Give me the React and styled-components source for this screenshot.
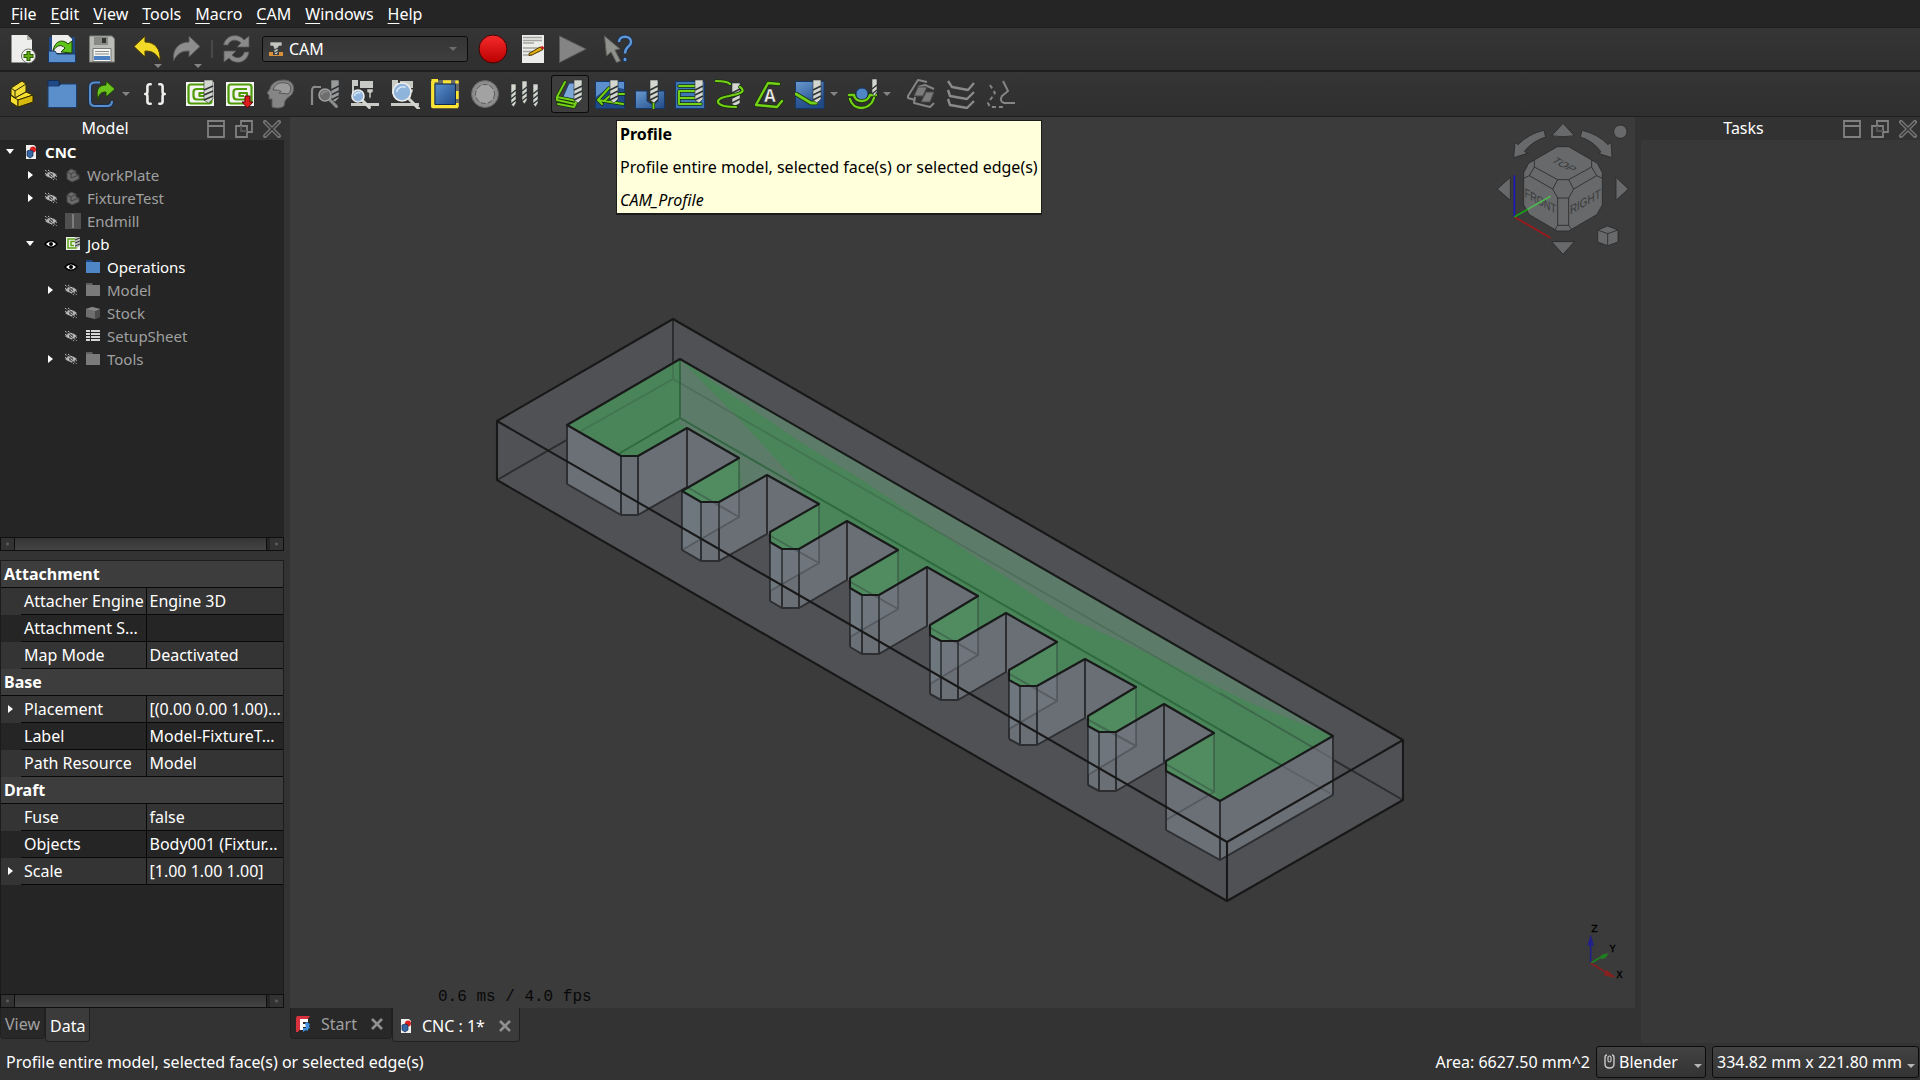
import React from 'react';
import styled, { createGlobalStyle, css } from 'styled-components';
import { Braces } from 'lucide-react';

const GlobalStyle = createGlobalStyle`
  * { box-sizing: border-box; }
  html, body { margin: 0; padding: 0; background: #333333; }
  body, button, select {
    font-family: "Noto Sans", "Open Sans", sans-serif;
    font-size: 16px;
    color: #ffffff;
  }
  button, select { border: 0; background: none; padding: 0; margin: 0; }
  svg { display: block; flex: none; }
`;

/* ---------- window ---------- */

const Window = styled.div`
  display: flex;
  flex-direction: column;
  height: 100vh;
  overflow: hidden;
  background: #333333;
`;

const MenuBar = styled.nav`
  display: flex;
  gap: 14px;
  height: 28px;
  padding-left: 11px;
  background: #252525;
  border-bottom: 1px solid #1e1e1e;
`;

const MenuButton = styled.button`
  line-height: 26px;

  &::first-letter {
    text-decoration: underline;
    text-underline-offset: 3px;
  }
`;

const Toolbar = styled.div`
  position: relative;
  z-index: 2;
  display: flex;
  align-items: center;
  flex: none;
  height: ${p => p.$height}px;
  padding-left: 2px;
  gap: 5px;
  background: linear-gradient(#353535, #2f2f2f);
  border-bottom: ${p => p.$line}px solid #1f1f1f;
`;

const Group = styled.div`
  display: flex;
  align-items: center;
`;

const ToolSlot = styled.div`
  position: relative;
  display: flex;
`;

const ToolButton = styled.button`
  display: flex;
  align-items: center;
  gap: 5px;
  height: 38px;
  width: ${p => (p.$menu ? 51 : 38)}px;
  padding-left: 4px;
  margin: 0 1px;
  border-radius: 3px;
  ${p => p.$active && css`
    background: #3d3d3d;
    box-shadow: inset 0 0 0 1px #0c0c0c;
  `}
`;

const Caret = styled.span`
  width: 0;
  height: 0;
  border: 4px solid transparent;
  border-top-color: ${p => p.$color || '#848484'};
  border-bottom: 0;
`;

const CornerCaret = styled(Caret)`
  position: absolute;
  right: 5px;
  bottom: 0;
`;

const Divider = styled.span`
  width: 2px;
  height: 18px;
  margin: 0 4px;
  background: #484848;
`;

const WorkbenchBox = styled.label`
  display: flex;
  align-items: center;
  width: 206px;
  height: 26px;
  padding: 0 10px 0 5px;
  border: 1px solid #0c0c0c;
  border-radius: 3px;
  background: linear-gradient(#353535, #3f3f3f);
`;

const WorkbenchSelect = styled.select`
  appearance: none;
  flex: 1;
  padding-left: 5px;
  outline: none;
`;

const Tip = styled.div`
  position: absolute;
  top: 45px;
  left: 66px;
  padding: 2px 3px;
  white-space: nowrap;
  line-height: 22px;
  color: #000000;
  background: #ffffdc;
  border: 1px solid #1c1c1c;
  border-bottom-width: 2px;

  p { margin: 0 0 11px; }
  p:last-child { margin: 0; }
`;

const Body = styled.div`
  display: flex;
  flex: 1;
  min-height: 0;
  gap: 6px;
`;

/* ---------- docks ---------- */

const LeftDock = styled.aside`
  display: flex;
  flex-direction: column;
  width: 284px;
`;

const RightDock = styled.aside`
  display: flex;
  flex-direction: column;
  width: 279px;
`;

const DockTitle = styled.header`
  display: flex;
  align-items: center;
  flex: none;
  gap: 10px;
  height: 23px;
  padding: 0 3px;
  background: #323232;

  h2 {
    flex: 1;
    margin: 0 -10px 0 0;
    font-size: 16px;
    font-weight: 400;
    line-height: 23px;
    text-align: center;
  }
`;

const DockBody = styled.div`
  flex: 1;
  background: #383838;
`;

const Tree = styled.ul`
  flex: 397;
  min-height: 0;
  margin: 0;
  padding: 0;
  list-style: none;
  background: #252525;
  font-size: 15px;
`;

const TreeRow = styled.li`
  display: flex;
  align-items: center;
  height: 23px;
  padding-left: ${p => p.$level * 20}px;
  color: ${p => (p.$dim ? '#a0a0a0' : '#ffffff')};
  font-weight: ${p => (p.$bold ? 700 : 400)};
`;

const TreeCell = styled.span`
  display: flex;
  justify-content: center;
  width: ${p => p.$w}px;
`;

const TreeText = styled.span`
  padding-left: 3px;
`;

const Expander = styled.span`
  width: 0;
  height: 0;
  border: 4px solid transparent;
  ${p => (p.$open
    ? css`border-top: 5px solid #ffffff; border-bottom: 0;`
    : css`border-left: 5px solid #ffffff; border-right: 0;`)}
`;

const ScrollBar = styled.div`
  display: flex;
  flex: none;
  height: 14px;
  border: 1px solid #0f0f0f;
  background: #252525;
`;

const ScrollEnd = styled.button`
  width: 13px;
  background: radial-gradient(circle, #5a5a5a 1px, #333333 2px);
`;

const ScrollThumb = styled.div`
  flex: 1;
  margin-right: 3px;
  border: solid #0f0f0f;
  border-width: 0 1px;
  background: linear-gradient(#353535, #444444);
`;

const PropertyPane = styled.div`
  flex: 434;
  min-height: 0;
  margin-top: 9px;
  background: #252525;
  border: 1px solid #1c1c1c;
  border-bottom: 0;
`;

const PropertyTable = styled.table`
  width: 100%;
  table-layout: fixed;
  border-collapse: collapse;
  line-height: 26px;

  th, td { padding: 0; text-align: left; height: 27px; }
`;

const GroupRow = styled.tr`
  background: #3d3d3d;
  th { padding-left: 3px; border-bottom: 1px solid #090909; }
`;

const PropRow = styled.tr`
  background: ${p => (p.$alt ? '#252525' : '#343434')};

  td, th {
    overflow: hidden;
    text-overflow: ellipsis;
    white-space: nowrap;
    font-weight: 400;
  }
  th { padding-left: 3px; border-bottom: 1px solid #090909; }
  td:last-child {
    padding-left: 3px;
    border-left: 1px solid #090909;
    border-bottom: 1px solid #090909;
  }
  td:first-child > span { margin-left: 7px; display: block; border-left-width: 5px; }
`;

const TabBar = styled.div`
  display: flex;
  align-items: flex-start;
  flex: none;
  height: 35px;
`;

const Tab = styled.button`
  display: flex;
  align-items: center;
  height: ${p => (p.$active ? 34 : 31)}px;
  padding: ${p => p.$pad || '2px 4px 0'};
  border: 1px solid #202020;
  border-top: 0;
  border-radius: 0 0 4px 4px;
  color: ${p => (p.$active ? '#ffffff' : '#a0a0a0')};
  background: ${p => (p.$active ? '#3b3b3b' : '#282828')};
`;

const TabText = styled.span`
  padding: 0 14px 0 10px;
`;

/* ---------- 3D view ---------- */

const Center = styled.main`
  display: flex;
  flex-direction: column;
  flex: 1;
  min-width: 0;
`;

const Viewport = styled.section`
  position: relative;
  flex: 1;
  min-height: 0;
  background: #3b3b3b;
`;

const SceneSvg = styled.svg`
  width: 100%;
  height: 100%;
`;

const CubeSvg = styled.svg`
  position: absolute;
  top: 0;
  right: 0;
`;

const AxisSvg = styled.svg`
  position: absolute;
  right: 0;
  bottom: 0;
`;

const Fps = styled.div`
  position: absolute;
  left: 148px;
  bottom: 1px;
  color: #080808;
  font-family: "Liberation Mono", monospace;
  font-size: 16px;
  line-height: 20px;
`;

/* ---------- status bar ---------- */

const StatusBar = styled.footer`
  display: flex;
  align-items: center;
  flex: none;
  gap: 6px;
  height: 37px;
  padding: 0 1px 0 6px;
`;

const StatusText = styled.span`
  flex: ${p => (p.$grow ? 1 : 'none')};
`;

const StatusButton = styled.button`
  display: flex;
  align-items: center;
  width: ${p => p.$w}px;
  height: 32px;
  padding: 0 3px 0 ${p => p.$left}px;
  border: 1px solid #0c0c0c;
  border-radius: 3px;
  background: linear-gradient(#424242, #333333);

  svg { margin-right: 4px; }
  span:last-child { margin: 8px 0 0 auto; }
`;

/* ---------- icons ---------- */

const Icon30 = ({ children }) => (
  <svg width="30" height="30" viewBox="0 0 30 30" fill="none" strokeLinejoin="round" aria-hidden="true">{children}</svg>
);

const Bit = ({ x, y, w = 8, h = 23, off }) => {
  const fill = off ? '#9a9a9a' : '#d3d7cf';
  const lines = [];
  for (let i = 6; i < h - 2; i += 5) lines.push(`M${x} ${y + i + 4}L${x + w} ${y + i}`);
  return (
    <g>
      <path d={`M${x} ${y}h${w}v${h - 4}l${-w / 2} 4l${-w / 2} -3z`} fill={fill} stroke="#2e3436" strokeWidth=".6" />
      <path d={lines.join('')} stroke="#2e3436" strokeWidth="1.5" />
    </g>
  );
};

const Green = ({ d, w = 2.2 }) => (
  <g fill="none" strokeLinecap="round">
    <path d={d} stroke="#17310a" strokeWidth={w + 1.4} />
    <path d={d} stroke="#73d216" strokeWidth={w} />
  </g>
);

const Glass = ({ x, y, r, off }) => (
  <g>
    <path d={`M${x + r * 0.7} ${y + r * 0.7}L${x + r * 1.9} ${y + r * 1.9}`} stroke={off ? '#8c8c8c' : '#d3d7cf'} strokeWidth="3" strokeLinecap="round" />
    <circle cx={x} cy={y} r={r} fill={off ? '#6e6e6e' : '#8fb4dc'} stroke={off ? '#a0a0a0' : '#eeeeec'} strokeWidth="1.6" />
    <path d={`M${x - r * 0.6} ${y}a${r * 0.7} ${r * 0.7} 0 0 1 ${r} ${-r * 0.5}`} stroke={off ? '#8c8c8c' : '#d5e5f5'} strokeWidth="1.5" />
  </g>
);

const JobBase = () => (
  <g>
    <rect x="1" y="3" width="28" height="24" fill="#f4f5f3" />
    <path d="M25 5.500H5.500Q3.500 5.500 3.500 8V22Q3.500 24.500 6 24.500H24Q26.500 24.500 26.500 22V8Q26.500 5.500 24 5.500" stroke="#4e9a06" strokeWidth="2.200" />
    <path d="M22 10H12Q8.500 10 8.500 13V17Q8.500 20.500 12 20.500H22V14H14.500V17H19" stroke="#4e9a06" strokeWidth="2.200" />
  </g>
);

const Machine = () => (
  <g fill="#c8cbc5">
    <path d="M2 1h6v6h-4v8h-2zM10 2h13v7h-13z" />
    <path d="M17 10h6v3l-2 1v4l-1 2-1-2v-4l-2-1z" stroke="#333" strokeWidth=".5" />
    <path d="M1 24h28v3h-28z" />
  </g>
);

const icons = {
  newDoc: (
    <Icon30>
      <path d="M4.500 1H20l5 5V28.500H4.500z" fill="#eeeeec" />
      <path d="M20 1v5h5z" fill="#a8aaa6" />
      <circle cx="21.500" cy="22" r="7" fill="#f3f4f2" stroke="#6d706b" />
      <path d="M21.500 17v10M16.500 22h10" stroke="#2c5c05" strokeWidth="4" />
      <path d="M21.500 18v8M17.500 22h8" stroke="#5fae12" strokeWidth="2" />
    </Icon30>
  ),
  open: (
    <Icon30>
      <path d="M2 3h4v24H2zM24 3h4v24h-4z" fill="#204a87" />
      <path d="M5 1h16l4 4v14H5z" fill="#eeeeec" />
      <path d="M1.500 17H8l2 3h18.500v8.500h-27z" fill="#5b8fcb" stroke="#173a6b" />
      <path d="M6 17C8 6 16 5 21 10l4-3v12l-11-1 4-4C14 10 10 11 6 17z" fill="#5fc41a" stroke="#1d4208" />
    </Icon30>
  ),
  save: (
    <Icon30>
      <path d="M3 2h22l2.500 3v23H2.500V3z" fill="#b9bcb6" stroke="#7b7e79" />
      <rect x="7" y="3" width="14" height="8" fill="#888a85" />
      <rect x="15" y="4" width="4" height="5" fill="#343434" />
      <rect x="6" y="14.500" width="18" height="13" fill="#f4f4f2" stroke="#77797a" />
      <path d="M8 17.500h14M8 20h14" stroke="#8c8e8a" />
      <path d="M7 24h16" stroke="#4a7fc1" strokeWidth="4" />
    </Icon30>
  ),
  undo: (
    <Icon30>
      <path d="M2 12.500L13 2v6C23 8 29 15 28 27C25 20 21 17 13 17v6z" fill="#f2d827" stroke="#4a3d00" />
    </Icon30>
  ),
  redo: (
    <Icon30>
      <path d="M28 12.500L17 2v6C7 8 0 15 1.500 27C5 20 9 17 17 17v6z" fill="#8d8d8d" stroke="#555" />
    </Icon30>
  ),
  refresh: (
    <Icon30>
      <path d="M1.500 11C4 0 17-1 22 6l5-4v11H15l4-4C15 5 8 5 6 11zM27 18C25 30 12 31 7 24l-5 4V17h12l-4 4C14 25 20 25 22.500 18z" fill="#8a8a8a" stroke="#555" strokeWidth=".8" />
    </Icon30>
  ),
  record: (
    <Icon30>
      <defs><linearGradient id="rec" x2="0" y2="1"><stop stopColor="#f72b2b" /><stop offset="1" stopColor="#b90000" /></linearGradient></defs>
      <circle cx="15" cy="15" r="14" fill="url(#rec)" stroke="#3c0505" />
    </Icon30>
  ),
  macro: (
    <Icon30>
      <path d="M4 1h22v28H4z" fill="#ecedeb" />
      <path d="M5 3.500h19M5 6.500h19M5 9h11M5 14h19M5 17.500h16M5 21h9" stroke="#a2a4a0" strokeWidth="1.500" />
      <path d="M11 19.500L22 13l3 2.500L14 21l-3 .5z" fill="#e0ad12" stroke="#4d3703" />
      <path d="M22 13l3 2.500 1.500-1.500-2-2z" fill="#d21a1a" />
    </Icon30>
  ),
  play: (
    <Icon30><path d="M1.500 2L28 15 1.500 28.500z" fill="#848484" stroke="#5b5b5b" /></Icon30>
  ),
  whats: (
    <Icon30>
      <path d="M1.500 2L17 15l-5 1 5.500 11-4 1.500L8 18l-4.500 4z" fill="#8f918d" stroke="#5b5d5a" />
      <path d="M16 8C16 1 28 1 28 8C28 13 22 12 22 19.500" stroke="#142f55" strokeWidth="4" />
      <path d="M16 8C16 1 28 1 28 8C28 13 22 12 22 19.500" stroke="#5f97d6" strokeWidth="2.500" />
      <rect x="20" y="23.500" width="4" height="4" rx="1.500" fill="#5f97d6" stroke="#142f55" />
    </Icon30>
  ),
  part: (
    <Icon30>
      <g stroke="#302b00">
        <path d="M4 9L15 2l4 3v8L8 19l-4-3z" fill="#f2dc3a" />
        <path d="M4 9l4 3 11-7M8 12v7" />
        <path d="M3.500 16l4.500 3 11-6 7 3v7L11 28l-7.500-5z" fill="#f6df31" />
        <path d="M3.500 16L11 21l15-5M11 21v7" />
        <path d="M11 21l15-5v7L11 28z" fill="#d9b90c" />
      </g>
    </Icon30>
  ),
  folder: (
    <Icon30>
      <path d="M1 1.500h10l2 3h-1v3H1z" fill="#204a87" stroke="#122d55" />
      <path d="M1 7h11l2-2h15.500v23.500H1z" fill="#5b8fcb" stroke="#1c3f70" />
    </Icon30>
  ),
  link: (
    <Icon30>
      <path d="M13 3.500H8Q3 3.500 3 8V22Q3 27 8 27H20Q25 27 25 22" stroke="#122d55" strokeWidth="3.600" />
      <path d="M13 3.500H8Q3 3.500 3 8V22Q3 27 8 27H20Q25 27 25 22" stroke="#5b8fcb" strokeWidth="2" />
      <path d="M11 21C8 9 13 6 19 6V2l9 8-9 8v-5C15 13 12 14 11 21z" fill="#6bc41c" stroke="#1d4208" />
    </Icon30>
  ),
  job: <Icon30><JobBase /><Bit x={19} y={1} w={9} h={23} /></Icon30>,
  post: (
    <Icon30>
      <JobBase />
      <path d="M20 17h5v6h3l-5.500 6-5.500-6h3z" fill="#e01b1b" stroke="#5a0606" />
    </Icon30>
  ),
  sanity: (
    <Icon30>
      <path d="M7 28V20H4V16L2 14 5 10C6 4 12 1 19 1C27 1 30 7 28 13C27 17 22 18 20 22L19 27C15 30 10 29 7 28z" fill="#858585" stroke="#5d5d5d" />
      <path d="M8 11C10 4 16 3 21 4C27 5 27 12 23 15L14 14C18 12 15 11 8 11z" fill="#9b9b9b" stroke="#555" />
    </Icon30>
  ),
  inspect: (
    <Icon30>
      <path d="M2 26V12Q2 7 6 8H11" stroke="#8a8a8a" strokeWidth="2.200" />
      <Bit x={21} y={1} w={8} h={22} off />
      <Glass x={15} y={16} r={6} off />
    </Icon30>
  ),
  simulate: <Icon30><Machine /><Glass x={8} y={17} r={6} /></Icon30>,
  simulateGl: <Icon30><Machine /><Glass x={12} y={13} r={9} /></Icon30>,
  stock: (
    <Icon30>
      <rect x="3" y="3" width="24" height="24" stroke="#686a66" strokeWidth="4" />
      <path d="M1.500 1.500H8M13 3h8M27 1.500v3M27 12v8M2.800 2V27.500H28M27 24v4" stroke="#fbe334" strokeWidth="3.400" />
      <defs><linearGradient id="stk" x2="1" y2="1"><stop stopColor="#5b8fcb" /><stop offset="1" stopColor="#204a87" /></linearGradient></defs>
      <rect x="5" y="5" width="20.500" height="20.500" fill="url(#stk)" stroke="#0f284d" />
    </Icon30>
  ),
  disc: (
    <Icon30>
      <circle cx="15" cy="15" r="13.500" fill="#8c8c8c" stroke="#666" />
      <circle cx="15" cy="15" r="9.500" fill="#a2a2a2" stroke="#5a5a5a" strokeDasharray="5 2" />
    </Icon30>
  ),
  bits: <Icon30><Bit x={1} y={5} w={5} h={23} /><Bit x={12} y={2} w={5} h={23} /><Bit x={23} y={5} w={5} h={23} /></Icon30>,
  profile: (
    <Icon30>
      <path d="M14 4h6v14l3 6-12 5-4-9z" fill="#7ba6d8" stroke="#163869" />
      <Green d="M10 3L2 18 22 22 19 28 3 25M2 18v3l18 4 3-5" w={2} />
      <Bit x={19} y={1} />
    </Icon30>
  ),
  pocket: (
    <Icon30>
      <rect x=".5" y="2.500" width="29" height="27" fill="#5b8fcb" stroke="#163869" />
      <path d="M1 29V18L15 7l14 3v19z" fill="#204a87" />
      <Green d="M14 9L3 21 28 25M29 15H17L9 22M3 21l4 4" w={2} />
      <Bit x={15} y={1} />
    </Icon30>
  ),
  drilling: (
    <Icon30>
      <defs><linearGradient id="drl" x2="1" y2="1"><stop stopColor="#6a9ad0" /><stop offset="1" stopColor="#204a87" /></linearGradient></defs>
      <path d="M.5 12H12V22l6 4 5-4V12h6.500V29.500H.5z" fill="url(#drl)" stroke="#163869" />
      <Green d="M18.500 24v6" w={1.800} />
      <Bit x={15} y={1} w={8} />
    </Icon30>
  ),
  face: (
    <Icon30>
      <rect x=".5" y="2.500" width="29" height="27" fill="#3f74b5" stroke="#163869" />
      <Green d="M4 7H24V12H4V19H20M4 19V25H26" w={2} />
      <Bit x={20} y={1} />
    </Icon30>
  ),
  helix: (
    <Icon30>
      <Bit x={17} y={4} w={8} h={24} />
      <Green d="M1 2C10 2 13 3 15 5M25 8C32 13 24 15 14 17C2 19 -1 24 9 27C14 28 19 28 21 28" />
    </Icon30>
  ),
  engrave: (
    <Icon30>
      <Green d="M24 5L13 4 1 26 22 28 27 22" w={2.400} />
      <text x="9" y="23" fontFamily="Noto Sans" fontSize="17" fontWeight="700" fill="#eeeeec" stroke="#2e3436" strokeWidth=".5">A</text>
    </Icon30>
  ),
  vcarve: (
    <Icon30>
      <defs><linearGradient id="vcv" x2=".6" y2="1"><stop stopColor="#6a9ad0" /><stop offset="1" stopColor="#204a87" /></linearGradient></defs>
      <rect x=".5" y="2.500" width="28.500" height="27" fill="url(#vcv)" stroke="#163869" />
      <path d="M1 14L17 23 29 16V29H1z" fill="#204a87" opacity=".5" />
      <Green d="M1 15L16 24 21 24" w={3} />
      <Bit x={18} y={1} />
    </Icon30>
  ),
  surface: (
    <Icon30>
      <circle cx="14" cy="15" r="6" fill="#4f86c6" stroke="#163869" />
      <Green d="M1 16H6C7 24 20 24 22 16H28M2 20C5 32 22 32 26 19" w={2.400} />
      <Bit x={24} y={0} w={5} h={17} />
    </Icon30>
  ),
  dressA: (
    <Icon30>
      <path d="M21 3L12 1 2 17V19L9 21M28 10L19 6 12 8M9 18L8 24 24 28 28 24" stroke="#858585" strokeWidth="2" />
      <path d="M12 8h9l-4 9H8zM20 13h8l-4 10h-9z" fill="#7c7c7c" stroke="#4a4a4a" />
    </Icon30>
  ),
  dressB: (
    <Icon30>
      <path d="M2 2L6 8 22 11 28 4M2 11L4 17 21 20 28 13M2 20L4 26 21 29 28 22" stroke="#8a8a8a" strokeWidth="2.400" />
    </Icon30>
  ),
  dressC: (
    <Icon30>
      <path d="M17 2L22 12 16 17Q13 22 18 24H29" stroke="#858585" strokeWidth="2" />
      <path d="M4 6L9 14 2 24 4 28H18" stroke="#858585" strokeWidth="2" strokeDasharray="4 3" />
    </Icon30>
  ),
};

const BracesIcon = () => (
  <Icon30><Braces x="2" y="2" width="26" height="26" color="#eeeeec" strokeWidth={2.4} /></Icon30>
);

const EyeIcon = ({ off }) => (
  <svg width="14" height="14" viewBox="0 0 14 14" aria-hidden="true">
    {off ? (
      <g>
        <path d="M1 7Q7 1 13 7Q7 13 1 7z" fill="#a6a6a6" />
        <circle cx="7" cy="7" r="2" fill="#4b4b4b" />
        <path d="M1 2L13 12M4 2L13 9M1 5L10 12" stroke="#e8e8e8" strokeDasharray="1 1" />
      </g>
    ) : (
      <g>
        <path d="M0 7Q7-1 14 7Q7 15 0 7z" fill="#000000" />
        <path d="M2 7Q7 2 12 7Q7 12 2 7z" fill="#ffffff" />
        <circle cx="7" cy="7" r="2" fill="#000000" />
      </g>
    )}
  </svg>
);

const DocIcon = () => (
  <svg width="12" height="16" viewBox="0 0 12 16" aria-hidden="true">
    <path d="M1 1h8l2 2v12H1z" fill="#f0f0ee" />
    <circle cx="8" cy="5.500" r="3" fill="#dc2020" />
    <path d="M2 7l3-1 3 1v5l-3 2-3-2z" fill="#3465a4" stroke="#13294a" strokeWidth=".7" />
  </svg>
);

const FreeCadLogo = () => (
  <svg width="16" height="16" viewBox="0 0 16 16" aria-hidden="true">
    <path d="M2 0H15L12 4H6V12L3 16H1V2z" fill="#d8323e" />
    <path d="M5 3h8v3H8v2h3v3H8v3H5z" fill="#ffffff" />
    <path d="M10 7l2-1 1 1 2 1-1 2 1 2-2 1v2l-2-1-3 2v-4h3z" fill="#418fde" />
  </svg>
);

const WorkbenchIcon = () => (
  <svg width="16" height="16" viewBox="0 0 16 16" aria-hidden="true">
    <path d="M1 11h4v3h6v-3h4v4H1z" fill="#d9903a" />
    <path d="M2 1h12v4h-3l-1 2v5l-2 2-2-2V7L5 5H2z" fill="#c4c7c1" stroke="#3a3d3f" strokeWidth=".7" />
    <path d="M6 9l4-2M6 12l4-2" stroke="#2e3436" />
  </svg>
);

const MouseIcon = () => (
  <svg width="11" height="15" viewBox="0 0 11 15" fill="none" aria-hidden="true">
    <path d="M3 1Q1 1 1 4V10Q1 14 5.500 14T10 10V4Q10 1 8 1" stroke="#c9c9c9" strokeWidth="1.400" />
    <rect x="4" y="2" width="3" height="6" rx="1.500" stroke="#c9c9c9" strokeWidth="1.200" />
  </svg>
);

const CloseMark = () => (
  <svg width="12" height="12" viewBox="0 0 12 12" aria-hidden="true">
    <path d="M1 1l10 10M11 1l-10 10" stroke="#909090" strokeWidth="2.600" />
  </svg>
);

const treeIcons = {
  body: <><path d="M2 5l4-3 5 2v3l3 1v4l-7 3-5-3z" fill="#6a6a6a" stroke="#444" /><path d="M2 5l4 2 5-3M6 7v4l8-3" stroke="#444" fill="none" /></>,
  mill: <><rect width="16" height="16" fill="#505050" /><path d="M8 1v14" stroke="#7d7d7d" strokeWidth="2" /></>,
  job: <><rect x="1" y="1" width="14" height="13" fill="#f0f0ee" /><path d="M11 3H3v9h8V5.500H6v4h3" stroke="#5fa617" strokeWidth="1.500" fill="none" /><path d="M10 1h5v9l-3 2-2-2z" fill="#b9bcb6" /><path d="M10 4l5-2M10 7l5-2M10 10l5-2" stroke="#2e3436" /></>,
  ops: <><path d="M1 1h6l1 2H1z" fill="#204a87" /><path d="M1 3h14v11H1z" fill="#4f86c6" /></>,
  group: <><path d="M1 1h6l1 2H1z" fill="#5e5e5e" /><path d="M1 3h14v11H1z" fill="#7a7a7a" /></>,
  cube: <><path d="M1 4l6-2 8 2v8l-5 2-9-2z" fill="#6e6e6e" /><path d="M10 6l5-2v8l-5 2z" fill="#4c4c4c" /><path d="M1 4l6-2 8 2-5 2z" fill="#868686" /></>,
  sheet: <path d="M1 2h4v2H1zM6 2h9v2H6zM1 5h4v2H1zM6 5h9v2H6zM1 8h4v2H1zM6 8h9v2H6zM1 11h4v2H1zM6 11h9v2H6z" fill="#d5d5d5" />,
};

/* ---------- data ---------- */

const menus = ['File', 'Edit', 'View', 'Tools', 'Macro', 'CAM', 'Windows', 'Help'];

const treeItems = [
  { level: 1, arrow: 'closed', off: true, icon: 'body', name: 'WorkPlate' },
  { level: 1, arrow: 'closed', off: true, icon: 'body', name: 'FixtureTest' },
  { level: 1, off: true, icon: 'mill', name: 'Endmill' },
  { level: 1, arrow: 'open', icon: 'job', name: 'Job' },
  { level: 2, icon: 'ops', name: 'Operations' },
  { level: 2, arrow: 'closed', off: true, icon: 'group', name: 'Model' },
  { level: 2, off: true, icon: 'cube', name: 'Stock' },
  { level: 2, off: true, icon: 'sheet', name: 'SetupSheet' },
  { level: 2, arrow: 'closed', off: true, icon: 'group', name: 'Tools' },
];

const propertyGroups = [
  { name: 'Attachment', rows: [['Attacher Engine', 'Engine 3D'], ['Attachment S...', ''], ['Map Mode', 'Deactivated']] },
  { name: 'Base', rows: [['Placement', '[(0.00 0.00 1.00)...', true], ['Label', 'Model-FixtureT...'], ['Path Resource', 'Model']] },
  { name: 'Draft', rows: [['Fuse', 'false'], ['Objects', 'Body001 (Fixtur...'], ['Scale', '[1.00 1.00 1.00]', true]] },
];

const camTools = [
  [['part', 'Create part'], ['folder', 'Create group'], ['link', 'Make link', true], ['braces', 'Expression']],
  [['job', 'Job'], ['post', 'Post process'], ['sanity', 'Check job']],
  [['inspect', 'Inspect toolpath'], ['simulate', 'Simulator'], ['simulateGl', 'New simulator'], ['stock', 'Finish selecting'], ['disc', 'Toggle operation'], ['bits', 'Tool library']],
  [['profile', 'Profile'], ['pocket', 'Pocket'], ['drilling', 'Drilling'], ['face', 'Face'], ['helix', 'Helix'], ['engrave', 'Engrave'], ['vcarve', 'Engraving tools', true], ['surface', '3D pocket', true]],
  [['dressA', 'Copy operation'], ['dressB', 'Array'], ['dressC', 'Simple copy']],
];

/* ---------- scene ---------- */

const DEPTH = 59;
const back = [680, 359];
const right = [1333, 736];
const front = [1220, 801];

// per notch: right end of the tooth front, inner corner, outer corner
const notches = [
  [[638, 456], [687, 428], [739, 458]],
  [[719, 502], [767, 475], [819, 504]],
  [[799, 549], [847, 521], [898, 550]],
  [[879, 595], [927, 567], [978, 596]],
  [[958, 641], [1006, 613], [1057, 642]],
  [[1037, 686], [1085, 659], [1136, 687]],
  [[1116, 732], [1164, 704], [1214, 733]],
];

// left side of each tooth, from the notch down to the chamfer
const toothLefts = [
  [[567, 425], [621, 456]],
  [[682, 491], [701, 502]],
  [[770, 532], [770, 542], [782, 549]],
  [[850, 578], [850, 588], [862, 595]],
  [[930, 625], [930, 635], [941, 641]],
  [[1009, 670], [1009, 680], [1020, 686]],
  [[1088, 716], [1088, 726], [1099, 732]],
  [[1166, 761], [1166, 771], front],
];

const str = pts => pts.map(p => p.join(',')).join(' ');
const down = p => [p[0], p[1] + DEPTH];
const wall = (a, b) => str([a, b, down(b), down(a)]);

const topFace = [back];
toothLefts.forEach((left, i) => {
  topFace.push(...left);
  if (notches[i]) topFace.push(...notches[i]);
});
topFace.push(right);

const Scene = () => (
  <SceneSvg viewBox="290 117 1345 891" role="img" aria-label="3D view of the fixture inside its stock" fill="none" strokeLinejoin="round">
    <polygon points="673,319 1403,740 1403,800 1227,901 497,480 497,421" fill="#505154" />
    <g stroke="#2c2d2f" strokeWidth="2">
      <path d="M673 319V379L497 480M673 379L1403 800" />
    </g>

    {notches.map(([, a, b], i) => <polygon key={i} points={wall(a, b)} fill="#6a6e75" />)}
    <polygon points={str(topFace)} fill="#4a8459" />
    <polygon points="680,359 740,420 797,482 802,493 767,475 742,489 739,458 687,428 680,424" fill="#5c7b68" />
    <polygon points="680,359 1333,736 1250,703 1158,658 1069,618 980,560 862,480 797,440" fill="#5c7b68" />
    {notches.map(([, , k], i) => {
      const l = toothLefts[i + 1];
      return <polygon key={i} points={str([k, l[0], ...l.slice(1), notches[i + 1] ? notches[i + 1][0] : front, down(k)])} fill="#69a779" opacity="0.22" />;
    })}
    <path d="M673 379L1333 759M673 379L567 439M673 360V379" stroke="#33503c" strokeOpacity="0.3" strokeWidth="1.7" />
    <path d="M680 359V418L567 484M680 418L1333 795" stroke="#1b5a2d" strokeOpacity="0.6" strokeWidth="2" />

    {toothLefts.map((left, i) => {
      const last = left[left.length - 1];
      const [d, e] = notches[i] || [front, right];
      const foot = left.length === 3 ? left.slice(1) : left;
      return (
        <g key={i} stroke="#2c2e31" strokeWidth="2" fill="#6a6e75">
          <g stroke="none">
            <polygon points={wall(foot[0], last)} fill="#6b7077" />
            <polygon points={wall(last, d)} />
            <polygon points={wall(d, e)} />
          </g>
          <polyline fill="none" points={str([...foot, d, e].map(down))} />
          {[foot[0], last, d, e].map((p, n) => <path key={n} d={`M${p}L${down(p)}`} />)}
        </g>
      );
    })}

    {notches.map(([, e, k], i) => {
      const l = toothLefts[i + 1][0];
      const foot = toothLefts[i + 1];
      const d = notches[i + 1] ? notches[i + 1][0] : null;
      return (
        <g key={i}>
          {d && <polygon points={str([[k[0], k[1] + 30], down(k), down(l), foot[foot.length - 2], foot[foot.length - 1], d])} fill="#8ea0ac" opacity="0.14" />}
          <path d={`M${k}V${k[1] + DEPTH}L${down(l)}M${down(k)}L${down(e)}`} stroke="#2a2f33" strokeOpacity="0.34" strokeWidth="2" />
        </g>
      );
    })}
    <path d="M1220 730L1333 795M1220 693L1333 759" stroke="#2a2f33" strokeOpacity="0.2" strokeWidth="1.7" />

    <polygon points={str(topFace)} stroke="#181a19" strokeWidth="2.1" />
    <g stroke="#181818" strokeWidth="2.1">
      <polygon points="673,319 1403,740 1403,800 1227,901 497,480 497,421" />
      <path d="M497 421L1227 842L1403 740M1227 842V901" />
    </g>
  </SceneSvg>
);

const NaviCube = () => (
  <CubeSvg width="140" height="140" viewBox="105 21 420 420" role="img" aria-label="Navigation cube">
    <g fill="#67696b" stroke="#29292a" strokeWidth="2.5" strokeLinejoin="round">
      <path d="M309 40L343 77Q309 84 275 77z" />
      <path d="M275 395H343L309 433z" />
      <path d="M112 237L151 202V271z" />
      <path d="M505 237L468 202V271z" />
      <circle cx="481" cy="65" r="20" />
      <path d="M252 61L257 81Q218 93 193 124L202 130L161 143L165 97L174 104Q205 72 252 61z" />
      <path d="M366 61L361 81Q400 93 423 126L414 130L456 143L453 97L444 104Q413 72 366 61z" />
      <path d="M413 360L443 348L474 360V396L443 407L413 396z" />
      <path d="M413 360L443 371L474 360M443 371V407" />
      <path d="M292 110H326L395 150L412 160L427 188V285L410 314L326 363H292L208 314L191 285V188L206 160L223 150z" />
      <path fill="none" d="M223 150V171L293 209H326L395 171V150M223 171L208 197L278 237L293 209M208 197L191 205M395 171L410 197L341 237L326 209M410 197L427 205M278 237L293 264H326L341 237M293 264V346L286 357M326 264V346L334 357M293 346H326" />
    </g>
    <g fontFamily="Liberation Sans" fontSize="38" fill="#39393a" textAnchor="middle">
      <text transform="matrix(.8 .44 -.8 .44 302 170)">TOP</text>
      <text transform="matrix(.72 .4 0 1 241 286)">FRONT</text>
      <text transform="matrix(.78 -.44 0 1 376 288)">RIGHT</text>
    </g>
    <g strokeWidth="5">
      <path d="M163 321V196" stroke="#1818b8" />
      <path d="M163 321L272 384" stroke="#9c1a1a" />
      <path d="M163 321L203 298" stroke="#18a018" />
      <path d="M203 298L272 259" stroke="#4fb552" />
    </g>
  </CubeSvg>
);

const AxisCross = () => (
  <AxisSvg width="50" height="87" viewBox="555 63 150 261" role="img" aria-label="Axis cross">
    <path d="M572 190V130" stroke="#202088" strokeWidth="5" />
    <path d="M572 103l10 34h-20z" fill="#202088" />
    <path d="M572 190L608 168" stroke="#208020" strokeWidth="5" />
    <path d="M627 159l-11 15-13 4 2-14z" fill="#208020" />
    <path d="M572 190L620 218" stroke="#882020" strokeWidth="5" />
    <path d="M649 234l-38-8 8-17z" fill="#882020" />
    <g fontFamily="DejaVu Sans" fontSize="28" fill="#000000" stroke="#000000">
      <text x="574" y="96">Z</text>
      <text x="629" y="156">Y</text>
      <text x="649" y="234">X</text>
    </g>
  </AxisSvg>
);

/* ---------- parts ---------- */

const Tool = ({ icon, label, menu, active, corner }) => (
  <ToolSlot>
    <ToolButton $menu={menu} $active={active} aria-label={label}>
      {icon === 'braces' ? <BracesIcon /> : icons[icon]}
      {menu && <Caret />}
    </ToolButton>
    {corner && <CornerCaret />}
    {active && (
      <Tip role="tooltip">
        <p><b>Profile</b></p>
        <p>Profile entire model, selected face(s) or selected edge(s)</p>
        <p><i>CAM_Profile</i></p>
      </Tip>
    )}
  </ToolSlot>
);

const DockHeader = ({ title }) => (
  <DockTitle>
    <h2>{title}</h2>
    <button aria-label="Minimize">
      <svg width="18" height="18" viewBox="0 0 18 18" fill="none" stroke="#808080" strokeWidth="1.8"><path d="M1 1h16v16H1zM1 6h16" /></svg>
    </button>
    <button aria-label="Float">
      <svg width="18" height="18" viewBox="0 0 18 18" fill="none" stroke="#808080" strokeWidth="1.8"><path d="M6 6V1h11v11h-5M1 6h11v11H1z" /><path d="M6 6v5h6" stroke="#555555" /></svg>
    </button>
    <button aria-label="Close">
      <svg width="18" height="18" viewBox="0 0 18 18"><path d="M2 2l14 14M16 2L2 16" stroke="#777777" strokeWidth="4" strokeLinecap="round" /><path d="M2 2l14 14M16 2L2 16" stroke="#383838" strokeWidth="1.5" /></svg>
    </button>
  </DockTitle>
);

const Scroller = () => (
  <ScrollBar>
    <ScrollEnd aria-label="Scroll left" />
    <ScrollThumb />
    <ScrollEnd aria-label="Scroll right" />
  </ScrollBar>
);

const ModelTree = () => (
  <Tree>
    <TreeRow $level={0} $bold>
      <TreeCell $w={20}><Expander $open /></TreeCell>
      <TreeCell $w={22}><DocIcon /></TreeCell>
      <TreeText>CNC</TreeText>
    </TreeRow>
    {treeItems.map((item, i) => (
      <TreeRow key={i} $level={item.level} $dim={item.off}>
        <TreeCell $w={20}>{item.arrow && <Expander $open={item.arrow === 'open'} />}</TreeCell>
        <TreeCell $w={22}><EyeIcon off={item.off} /></TreeCell>
        <TreeCell $w={22}>
          <svg width="16" height="16" viewBox="0 0 16 16" aria-hidden="true">{treeIcons[item.icon]}</svg>
        </TreeCell>
        <TreeText>{item.name}</TreeText>
      </TreeRow>
    ))}
  </Tree>
);

const Properties = () => (
  <PropertyPane>
    <PropertyTable>
      <colgroup>
        <col width="20" />
        <col width="125" />
        <col />
      </colgroup>
      <tbody>
        {propertyGroups.map(group => (
          <React.Fragment key={group.name}>
            <GroupRow><th colSpan={3} scope="rowgroup">{group.name}</th></GroupRow>
            {group.rows.map(([name, value, expandable], i) => (
              <PropRow key={name} $alt={i % 2 === 1}>
                <td>{expandable && <Expander />}</td>
                <th scope="row">{name}</th>
                <td>{value}</td>
              </PropRow>
            ))}
          </React.Fragment>
        ))}
      </tbody>
    </PropertyTable>
  </PropertyPane>
);

export default function App() {
  return (
    <Window>
      <GlobalStyle />
      <MenuBar>
        {menus.map(name => <MenuButton key={name}>{name}</MenuButton>)}
      </MenuBar>

      <Toolbar $height={44} $line={2}>
        <Group>
          <Tool icon="newDoc" label="New" />
          <Tool icon="open" label="Open" />
          <Tool icon="save" label="Save" />
        </Group>
        <Group>
          <Tool icon="undo" label="Undo" corner />
          <Tool icon="redo" label="Redo" corner />
          <Divider />
          <Tool icon="refresh" label="Refresh" />
        </Group>
        <WorkbenchBox>
          <WorkbenchIcon />
          <WorkbenchSelect aria-label="Workbench" defaultValue="CAM">
            <option>CAM</option>
          </WorkbenchSelect>
          <Caret $color="#6c6c6c" />
        </WorkbenchBox>
        <Group>
          <Tool icon="record" label="Record macro" />
          <Tool icon="macro" label="Macros" />
          <Tool icon="play" label="Run macro" />
        </Group>
        <Tool icon="whats" label="What's this?" />
      </Toolbar>

      <Toolbar $height={45} $line={1}>
        {camTools.map((group, i) => (
          <Group key={i}>
            {group.map(([icon, label, menu]) => (
              <Tool key={icon} icon={icon} label={label} menu={menu} active={icon === 'profile'} />
            ))}
          </Group>
        ))}
      </Toolbar>

      <Body>
        <LeftDock>
          <DockHeader title="Model" />
          <ModelTree />
          <Scroller />
          <Properties />
          <Scroller />
          <TabBar>
            <Tab>View</Tab>
            <Tab $active>Data</Tab>
          </TabBar>
        </LeftDock>

        <Center>
          <Viewport>
            <Scene />
            <NaviCube />
            <AxisCross />
            <Fps>0.6 ms / 4.0 fps</Fps>
          </Viewport>
          <TabBar>
            <Tab $pad="2px 8px 0 4px"><FreeCadLogo /><TabText>Start</TabText><CloseMark /></Tab>
            <Tab $active $pad="2px 8px 0 7px"><DocIcon /><TabText>CNC : 1*</TabText><CloseMark /></Tab>
          </TabBar>
        </Center>

        <RightDock>
          <DockHeader title="Tasks" />
          <DockBody />
        </RightDock>
      </Body>

      <StatusBar>
        <StatusText $grow>Profile entire model, selected face(s) or selected edge(s)</StatusText>
        <StatusText>Area: 6627.50 mm^2</StatusText>
        <StatusButton $w={110} $left={7}>
          <MouseIcon />
          Blender
          <Caret $color="#b5b5b5" />
        </StatusButton>
        <StatusButton $w={207} $left={4}>
          334.82 mm x 221.80 mm
          <Caret $color="#b5b5b5" />
        </StatusButton>
      </StatusBar>
    </Window>
  );
}
